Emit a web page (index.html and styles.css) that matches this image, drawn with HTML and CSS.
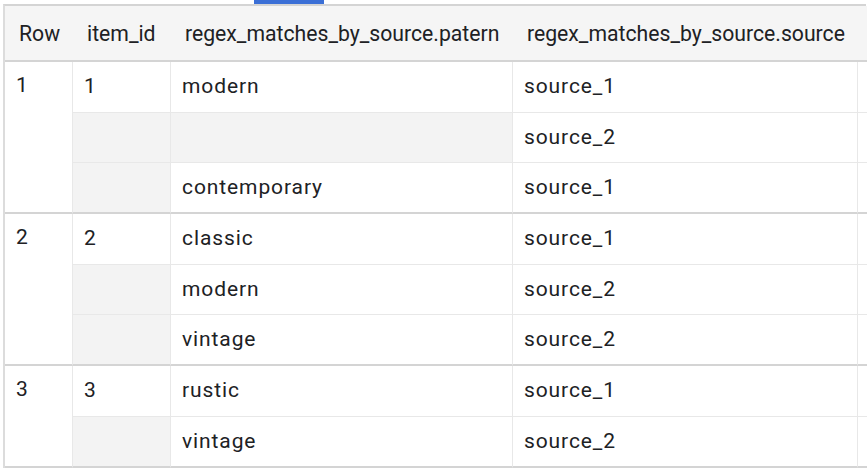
FILE: index.html
```html
<!DOCTYPE html>
<html lang="en">
<head>
    <meta charset="UTF-8">
    <meta name="viewport" content="width=device-width, initial-scale=1.0">
    <title>Query results</title>
    <link rel="stylesheet" href="styles.css">
</head>
<body>

    <!-- Active tab marker -->
    <div class="tab-strip">
        <div class="tab-marker"></div>
    </div>

    <div class="results">
        <div class="grid">
            <!-- Header -->
            <div class="head">Row</div>
            <div class="head">item_id</div>
            <div class="head">regex_matches_by_source.patern</div>
            <div class="head">regex_matches_by_source.source</div>
            <div class="head filler"></div>

            <!-- Row 1 -->
            <div class="cell row-num span3">1</div>
            <div class="cell">1</div>
            <div class="cell">modern</div>
            <div class="cell">source_1</div>
            <div class="cell filler"></div>

            <div class="cell empty"></div>
            <div class="cell empty"></div>
            <div class="cell">source_2</div>
            <div class="cell filler"></div>

            <div class="cell empty end"></div>
            <div class="cell end">contemporary</div>
            <div class="cell end">source_1</div>
            <div class="cell filler end"></div>

            <!-- Row 2 -->
            <div class="cell row-num span3">2</div>
            <div class="cell">2</div>
            <div class="cell">classic</div>
            <div class="cell">source_1</div>
            <div class="cell filler"></div>

            <div class="cell empty"></div>
            <div class="cell">modern</div>
            <div class="cell">source_2</div>
            <div class="cell filler"></div>

            <div class="cell empty end"></div>
            <div class="cell end">vintage</div>
            <div class="cell end">source_2</div>
            <div class="cell filler end"></div>

            <!-- Row 3 -->
            <div class="cell row-num span2">3</div>
            <div class="cell">3</div>
            <div class="cell">rustic</div>
            <div class="cell">source_1</div>
            <div class="cell filler"></div>

            <div class="cell empty end"></div>
            <div class="cell end">vintage</div>
            <div class="cell end">source_2</div>
            <div class="cell filler end"></div>
        </div>
    </div>

</body>
</html>
```

FILE: styles.css
```css
body {
    margin: 0;
    font-family: Roboto, "Liberation Sans", Arial, sans-serif;
    font-size: 21px;
    color: #202124;
    background: #fff;
}

.tab-strip {
    height: 4px;
    padding-left: 254px;
}

.tab-marker {
    width: 70px;
    height: 4px;
    background: #3b6fd6;
}

.results {
    margin-left: 3px;
    width: 861px;
    border-top: 2px solid #d4d4d4;
    border-left: 2px solid #dcdcdc;
}

.grid {
    display: grid;
    grid-template-columns: 68px 98px 342px 345px 1fr;
    grid-template-rows: 56px 51px 50px 51px 51px 50px 51px 51px 51px;
}

.head {
    display: flex;
    align-items: center;
    padding-left: 14px;
    font-size: 21.2px;
    background: #f5f5f5;
    border-bottom: 2px solid #d4d4d4;
    white-space: nowrap;
}

.cell {
    display: flex;
    align-items: center;
    padding: 0 0 2px 11px;
    letter-spacing: 0.9px;
    border-right: 1px solid #e8e8e8;
    border-bottom: 1px solid #e8e8e8;
    white-space: nowrap;
}

.row-num {
    align-items: flex-start;
    padding-bottom: 0;
    line-height: 47px;
    border-bottom: 2px solid #d4d4d4;
}

.span3 {
    grid-row: span 3;
}

.span2 {
    grid-row: span 2;
}

.empty {
    background: #f3f3f3;
}

.end {
    border-bottom: 2px solid #d4d4d4;
}

.filler {
    border-right: none;
}
```
